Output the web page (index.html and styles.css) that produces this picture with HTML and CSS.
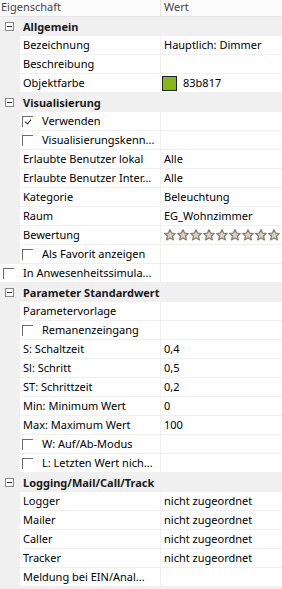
FILE: index.html
```html
<!DOCTYPE html>
<html lang="de">
<head>
    <meta charset="UTF-8">
    <title>Eigenschaften</title>
    <link rel="stylesheet" href="styles.css">
</head>
<body>
    <div class="grid">
        <div class="head">
            <div class="hname">Eigenschaft</div>
            <div class="hval">Wert</div>
        </div>

        <div class="cat"><span class="toggle"></span>Allgemein</div>
        <div class="row"><div class="name">Bezeichnung</div><div class="val">Hauptlich: Dimmer</div></div>
        <div class="row"><div class="name">Beschreibung</div><div class="val"></div></div>
        <div class="row"><div class="name">Objektfarbe</div><div class="val"><span class="swatch"></span>83b817</div></div>

        <div class="cat"><span class="toggle"></span>Visualisierung</div>
        <div class="row"><div class="name"><span class="cb checked"></span>Verwenden</div><div class="val"></div></div>
        <div class="row"><div class="name"><span class="cb"></span>Visualisierungskenn...</div><div class="val"></div></div>
        <div class="row"><div class="name">Erlaubte Benutzer lokal</div><div class="val">Alle</div></div>
        <div class="row"><div class="name">Erlaubte Benutzer Inter...</div><div class="val">Alle</div></div>
        <div class="row"><div class="name">Kategorie</div><div class="val">Beleuchtung</div></div>
        <div class="row"><div class="name">Raum</div><div class="val">EG_Wohnzimmer</div></div>
        <div class="row"><div class="name">Bewertung</div><div class="val stars" id="stars"></div></div>
        <div class="row"><div class="name"><span class="cb"></span>Als Favorit anzeigen</div><div class="val"></div></div>
        <div class="row wide"><div class="name"><span class="cb"></span>In Anwesenheitssimula...</div><div class="val"></div></div>

        <div class="cat"><span class="toggle"></span>Parameter Standardwert</div>
        <div class="row"><div class="name">Parametervorlage</div><div class="val"></div></div>
        <div class="row"><div class="name"><span class="cb"></span>Remanenzeingang</div><div class="val"></div></div>
        <div class="row"><div class="name">S: Schaltzeit</div><div class="val">0,4</div></div>
        <div class="row"><div class="name">Sl: Schritt</div><div class="val">0,5</div></div>
        <div class="row"><div class="name">ST: Schrittzeit</div><div class="val">0,2</div></div>
        <div class="row"><div class="name">Min: Minimum Wert</div><div class="val">0</div></div>
        <div class="row"><div class="name">Max: Maximum Wert</div><div class="val">100</div></div>
        <div class="row"><div class="name"><span class="cb"></span>W: Auf/Ab-Modus</div><div class="val"></div></div>
        <div class="row"><div class="name"><span class="cb"></span>L: Letzten Wert nich...</div><div class="val"></div></div>

        <div class="cat"><span class="toggle"></span>Logging/Mail/Call/Track</div>
        <div class="row"><div class="name">Logger</div><div class="val">nicht zugeordnet</div></div>
        <div class="row"><div class="name">Mailer</div><div class="val">nicht zugeordnet</div></div>
        <div class="row"><div class="name">Caller</div><div class="val">nicht zugeordnet</div></div>
        <div class="row"><div class="name">Tracker</div><div class="val">nicht zugeordnet</div></div>
        <div class="row"><div class="name">Meldung bei EIN/Anal...</div><div class="val"></div></div>
    </div>

    <script>
        const star = '<svg width="12" height="12" viewBox="0 0 12 12"><path d="M6 0.7 L7.6 4.1 L11.3 4.5 L8.5 7 L9.4 10.9 L6 8.9 L2.6 10.9 L3.5 7 L0.7 4.5 L4.4 4.1 Z" fill="#d8d1c1" stroke="#857b6b" stroke-width="1.2" stroke-linejoin="round"/></svg>';
        document.getElementById('stars').innerHTML = star.repeat(9);
    </script>
</body>
</html>
```

FILE: styles.css
```css
body {
    margin: 0;
    padding: 0;
    background-color: #f0f0f0;
    font-family: "Noto Sans", sans-serif;
    font-size: 11px;
    color: #000;
}

.grid {
    width: 282px;
    overflow: hidden;
}

.head {
    display: flex;
    height: 16px;
    background: #fcfcfc;
    border-bottom: 1px solid #e5e5e5;
    color: #444;
    line-height: 13px;
}

.hname {
    width: 159px;
    padding-left: 1px;
    border-right: 1px solid #e5e5e5;
}

.hval {
    padding-left: 3px;
}

.cat {
    display: flex;
    align-items: center;
    height: 18px;
    border-bottom: 1px solid #f0f0f0;
    background: #f0f0f0;
    font-weight: bold;
    color: #1a1a1a;
    white-space: nowrap;
}

.toggle {
    position: relative;
    width: 7px;
    height: 7px;
    margin: 0 9px 0 5px;
    border: 1px solid #8a8a8a;
    background: #fff;
}

.toggle::after {
    content: "";
    position: absolute;
    left: 1px;
    top: 3px;
    width: 5px;
    height: 1px;
    background: #333;
}

.row {
    display: flex;
    height: 18px;
    padding-left: 20px;
    border-bottom: 1px solid #f0f0f0;
    background: #f0f0f0;
    line-height: 18px;
    white-space: nowrap;
}

.name {
    display: flex;
    align-items: center;
    width: 137px;
    padding-left: 3px;
    border-right: 1px solid #f0f0f0;
    background: #fff;
    overflow: hidden;
}

.val {
    display: flex;
    align-items: center;
    flex: 1;
    padding-left: 3px;
    background: #fff;
    overflow: hidden;
}

.row.wide {
    padding-left: 0;
}

.row.wide .name {
    width: 157px;
}

.cb {
    position: relative;
    flex: none;
    width: 10px;
    height: 10px;
    margin: 0 9px 0 -1px;
    border-top: 1px solid #6d6d6d;
    border-left: 1px solid #6d6d6d;
}

.cb.checked::after {
    content: "";
    position: absolute;
    left: 3px;
    top: 1px;
    width: 3px;
    height: 5px;
    border-right: 1px solid #222;
    border-bottom: 1px solid #222;
    transform: rotate(40deg);
}

.row.wide .cb {
    margin-left: 0;
}

.swatch {
    flex: none;
    width: 13px;
    height: 13px;
    margin: 0 6px 0 -2px;
    border: 1px solid #222;
    background: #83b817;
}

.stars {
    padding-left: 3px;
}

.stars svg {
    flex: none;
    margin-right: 1px;
}
```
